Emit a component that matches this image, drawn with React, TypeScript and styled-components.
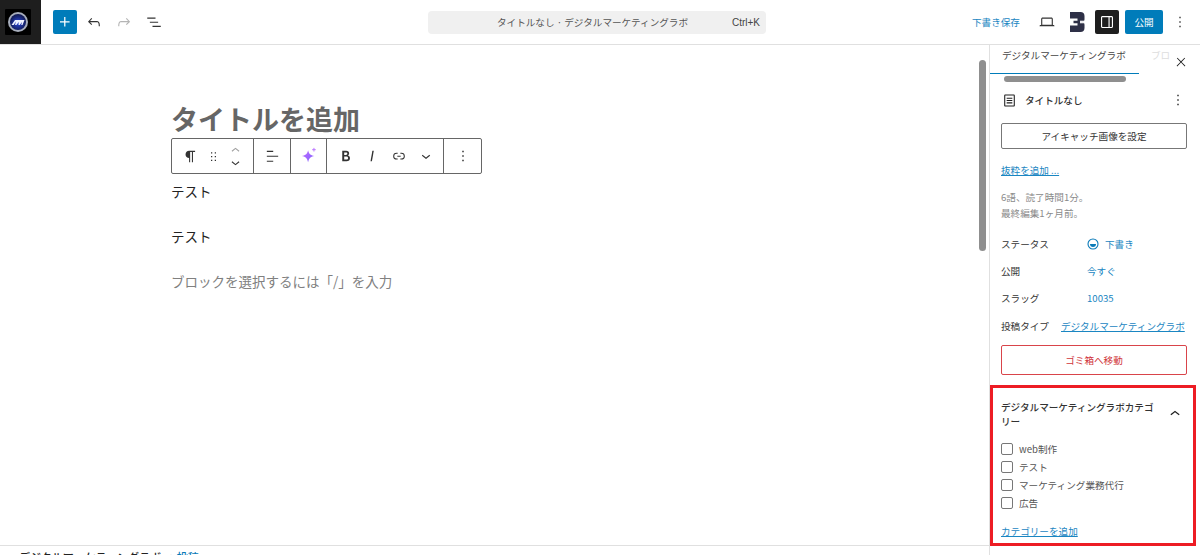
import React, { ReactElement } from "react";
import styled, { createGlobalStyle } from "styled-components";

const paths = {
  plus: "M11 12.5V17.5H12.5V12.5H17.5V11H12.5V6H11V11H6V12.5H11Z",
  undo: "M18.3 11.7c-.6-.6-1.4-.9-2.3-.9H6.7l2.9-3.3-1.1-1-4.5 5L8.5 16l1-1-2.7-2.7H16c.5 0 .9.2 1.3.5 1 1 1 3.4 1 4.5v.3h1.5v-.2c0-1.5 0-4.3-1.5-5.7z",
  redo: "M15.6 6.5l-1.1 1 2.9 3.3H8c-.9 0-1.7.3-2.3.9-1.4 1.5-1.4 4.2-1.4 5.6v.2h1.5v-.3c0-1.1 0-3.5 1-4.5.3-.3.7-.5 1.3-.5h9.2L14.5 15l1.1 1.1 4.6-4.6-4.6-5z",
  list: "M3 6h11v1.5H3V6Zm3.5 5.500h11V13h-11v-1.5ZM21 17H10v1.500h11V17Z",
  laptop:
    "M20.5 16h-.7V8c0-1.1-.9-2-2-2H6.2c-1.1 0-2 .9-2 2v8h-.7c-.8 0-1.5.7-1.5 1.5h20c0-.8-.7-1.5-1.5-1.5zM5.7 8c0-.3.2-.5.5-.5h11.6c.3 0 .5.2.5.5v7.6H5.7V8z",
  drawer:
    "M18 4H6c-1.1 0-2 .9-2 2v12c0 1.1.9 2 2 2h12c1.1 0 2-.9 2-2V6c0-1.1-.9-2-2-2zm-4 14.5H6c-.3 0-.5-.2-.5-.5V6c0-.3.2-.5.5-.5h8v13zm4.5-.5c0 .3-.2.5-.5.5h-2.5v-13H18c.3 0 .5.2.5.5v12z",
  more: "M13 19h-2v-2h2v2zm0-6h-2v-2h2v2zm0-6h-2V5h2v2z",
  close:
    "M13 11.8l6.1-6.3-1-1-6.1 6.2-6.1-6.2-1 1 6.1 6.3-6.5 6.7 1 1 6.5-6.6 6.5 6.6 1-1z",
  up: "M6.5 12.4L12 8l5.5 4.4-.9 1.2L12 10l-4.5 3.6-1-1.2z",
  down: "M17.5 11.6L12 16l-5.5-4.4.9-1.2L12 14l4.5-3.6 1 1.2z",
  pilcrow:
    "m9.99609 14v-.2251l.00391.0001v6.225h1.5v-14.5h2.5v14.5h1.5v-14.5h3v-1.5h-8.50391c-2.76142 0-5 2.23858-5 5 0 2.7614 2.23858 5 5 5z",
  drag: "M8 7h2V5H8v2zm0 6h2v-2H8v2zm0 6h2v-2H8v2zm6-14v2h2V5h-2zm0 8h2v-2h-2v2zm0 6h2v-2h-2v2z",
  align: "M13 5.5H4V4h9v1.5Zm7 7H4V11h16v1.5Zm-7 7H4V18h9v1.5Z",
  bold: "M14.7 11.3c1-.6 1.5-1.6 1.5-3 0-2.3-1.3-3.4-4-3.4H7v14h5.8c1.4 0 2.5-.3 3.3-1 .8-.7 1.2-1.7 1.2-2.9.1-1.9-.8-3.1-2.6-3.7zm-5.1-4h2.3c.6 0 1.1.1 1.4.4.3.3.5.7.5 1.2s-.2 1-.5 1.2c-.3.3-.8.4-1.4.4H9.6V7.3zm4.6 9c-.4.3-1 .4-1.7.4H9.6v-3.9h2.9c.7 0 1.3.2 1.7.5.4.3.6.8.6 1.5s-.2 1.2-.6 1.5z",
  italic: "M12.5 5L10 19h1.9l2.5-14z",
  link: "M10 17.389H8.444A5.194 5.194 0 1 1 8.444 7H10v1.5H8.444a3.694 3.694 0 0 0 0 7.389H10v1.5ZM14 7h1.556a5.194 5.194 0 0 1 0 10.39H14v-1.5h1.556a3.694 3.694 0 0 0 0-7.39H14V7Zm-4.5 6h5v-1.5h-5V13Z",
  doc: "M18 3.5H6c-.8 0-1.500.7-1.500 1.500v14c0 .8.7 1.500 1.500 1.500h12c.8 0 1.500-.7 1.500-1.500V5c0-.8-.7-1.500-1.500-1.500zm0 15.500H6V5h12v14zM8 8h8v1.500H8V8zm0 3.300h8v1.500H8v-1.500zm0 3.300h8v1.500H8v-1.500z",
};

type IconName = keyof typeof paths;

function Icon({ name, size = 20 }: { name: IconName; size?: number }): ReactElement {
  return (
    <svg width={size} height={size} viewBox="0 0 24 24" fill="currentColor">
      <path d={paths[name]} />
    </svg>
  );
}

function App(): ReactElement {
  return (
    <>
      <GlobalStyle />
      <Page>
        <TopBar>
          <LogoTile>
            <svg width="26" height="26" viewBox="0 0 26 26">
              <defs>
                <radialGradient id="logoFace" cx="0.5" cy="0.55" r="0.6">
                  <stop offset="0" stopColor="#2c49d8" />
                  <stop offset="1" stopColor="#0c1240" />
                </radialGradient>
              </defs>
              <rect width="26" height="26" rx="1" fill="#000" />
              <circle cx="13" cy="13" r="10" fill="#a7adbb" />
              <circle cx="13" cy="13" r="8" fill="url(#logoFace)" />
              <path d="M6.500 16l3.500-5h9.500l-2 5h-1.300l.8-3-2.300 3h-1.200l.2-3-2.300 3h-1.300l.7-3.500-2 3.500z" fill="#eef1ff" />
            </svg>
          </LogoTile>
          <LeftTools>
            <InserterButton>
              <Icon name="plus" size={20} />
            </InserterButton>
            <ToolButton>
              <Icon name="undo" size={18} />
            </ToolButton>
            <ToolButton $muted>
              <Icon name="redo" size={18} />
            </ToolButton>
            <ToolButton>
              <Icon name="list" size={18} />
            </ToolButton>
          </LeftTools>
          <CommandBar>
            <CommandTitle>タイトルなし · デジタルマーケティングラボ</CommandTitle>
            <CommandKey>Ctrl+K</CommandKey>
          </CommandBar>
          <RightTools>
            <SaveDraft>下書き保存</SaveDraft>
            <ToolButton>
              <Icon name="laptop" size={18} />
            </ToolButton>
            <BrandMark>
              <svg width="16" height="20" viewBox="0 0 16 20">
                <path d="M1 0h10.500C14 0 15.500 1.500 15.500 4v3c0 1.300-.5 2.300-1.300 3 .8.700 1.300 1.700 1.300 3v3c0 2.500-1.500 4-4 4H1z" fill="#2e3047" />
                <path d="M1 6.500h7.500v2.200H4.500v2.600h4v2.200H1z" fill="#fff" />
                <path d="M11 8.700h4.500v2.600H11z" fill="#fff" opacity="0.9" />
              </svg>
            </BrandMark>
            <DrawerToggle>
              <Icon name="drawer" size={18} />
            </DrawerToggle>
            <PublishButton>公開</PublishButton>
            <KebabSlot>
              <Icon name="more" size={18} />
            </KebabSlot>
          </RightTools>
        </TopBar>

        <Workspace>
          <Editor>
            <Canvas>
              <PostTitle>タイトルを追加</PostTitle>
              <BlockToolbar>
                <ToolbarGroup $width={82}>
                  <ToolbarGlyph $width={32}>
                    <Icon name="pilcrow" size={17} />
                  </ToolbarGlyph>
                  <ToolbarGlyph $width={14}>
                    <Icon name="drag" size={15} />
                  </ToolbarGlyph>
                  <MoverStack>
                    <MoverArrow $muted>
                      <Icon name="up" size={17} />
                    </MoverArrow>
                    <MoverArrow>
                      <Icon name="down" size={17} />
                    </MoverArrow>
                  </MoverStack>
                </ToolbarGroup>
                <ToolbarGroup $width={37}>
                  <Icon name="align" size={17} />
                </ToolbarGroup>
                <ToolbarGroup $width={36}>
                  <svg width="18" height="18" viewBox="0 0 20 20">
                    <defs>
                      <linearGradient id="spark" x1="0" y1="0" x2="1" y2="1">
                        <stop offset="0" stopColor="#c26bff" />
                        <stop offset="1" stopColor="#7d62ff" />
                      </linearGradient>
                    </defs>
                    <path d="M9 3.500c.9 4 2.500 5.600 7 6.500-4.500.9-6.100 2.500-7 7-.9-4.500-2.500-6.100-7-7 4.500-.9 6.100-2.500 7-6.500z" fill="url(#spark)" />
                    <path d="M15.500 1v4M13.500 3h4" stroke="#b66bff" strokeWidth="1" />
                  </svg>
                </ToolbarGroup>
                <ToolbarGroup $width={117}>
                  <ToolbarGlyph $width={28}>
                    <Icon name="bold" size={18} />
                  </ToolbarGlyph>
                  <ToolbarGlyph $width={25}>
                    <Icon name="italic" size={18} />
                  </ToolbarGlyph>
                  <ToolbarGlyph $width={29}>
                    <Icon name="link" size={16} />
                  </ToolbarGlyph>
                  <ToolbarGlyph $width={25}>
                    <Icon name="down" size={18} />
                  </ToolbarGlyph>
                </ToolbarGroup>
                <ToolbarGroup $width={38} $last>
                  <Icon name="more" size={18} />
                </ToolbarGroup>
              </BlockToolbar>
              <Paragraph>テスト</Paragraph>
              <Paragraph>テスト</Paragraph>
              <Paragraph $placeholder>ブロックを選択するには「/」を入力</Paragraph>
            </Canvas>
            <ScrollTrack>
              <ScrollThumb />
            </ScrollTrack>
          </Editor>

          <Sidebar>
            <TabRow>
              <Tab $active>デジタルマーケティングラボ</Tab>
              <GhostTab>ブロ</GhostTab>
              <CloseSlot>
                <Icon name="close" size={14} />
              </CloseSlot>
            </TabRow>
            <SideScrollThumb />
            <DocRow>
              <Icon name="doc" size={17} />
              <DocTitle>タイトルなし</DocTitle>
              <DocMore>
                <Icon name="more" size={18} />
              </DocMore>
            </DocRow>
            <Panel>
              <OutlineButton>アイキャッチ画像を設定</OutlineButton>
              <ExcerptLink>抜粋を追加 ...</ExcerptLink>
              <MetaText>
                6語、読了時間1分。
                <br />
                最終編集1ヶ月前。
              </MetaText>
              <FieldList>
                <FieldRow>
                  <FieldLabel>ステータス</FieldLabel>
                  <FieldValue>
                    <svg width="12" height="12" viewBox="0 0 12 12">
                      <circle cx="6" cy="6" r="5" fill="none" stroke="#0a7ab8" strokeWidth="1.100" />
                      <path d="M3 6h6a3 3 0 0 1-6 0z" fill="#0a7ab8" />
                    </svg>
                    下書き
                  </FieldValue>
                </FieldRow>
                <FieldRow>
                  <FieldLabel>公開</FieldLabel>
                  <FieldValue>今すぐ</FieldValue>
                </FieldRow>
                <FieldRow>
                  <FieldLabel>スラッグ</FieldLabel>
                  <FieldValue>10035</FieldValue>
                </FieldRow>
                <FieldRow>
                  <FieldLabel>投稿タイプ</FieldLabel>
                  <PostTypeLink>デジタルマーケティングラボ</PostTypeLink>
                </FieldRow>
              </FieldList>
              <TrashButton>ゴミ箱へ移動</TrashButton>
            </Panel>
            <CategoryPanel>
              <CategoryHeader>
                <CategoryTitle>デジタルマーケティングラボカテゴリー</CategoryTitle>
                <Icon name="up" size={20} />
              </CategoryHeader>
              <CheckList>
                {["web制作", "テスト", "マーケティング業務代行", "広告"].map((label) => (
                  <CheckRow key={label}>
                    <CheckBox />
                    {label}
                  </CheckRow>
                ))}
              </CheckList>
              <AddCategory>カテゴリーを追加</AddCategory>
            </CategoryPanel>
          </Sidebar>
        </Workspace>

        <FooterBar>
          デジタルマーケティングラボ → <FooterLink>投稿</FooterLink>
        </FooterBar>
      </Page>
    </>
  );
}

const GlobalStyle = createGlobalStyle`
  html, body {
    margin: 0;
    padding: 0;
    background: #fff;
  }

  body {
    font-family: "Noto Sans CJK JP", "Noto Sans", sans-serif;
    color: #1e1e1e;
  }

  svg {
    display: block;
    flex-shrink: 0;
  }
`;

const Page = styled.div`
  width: 1200px;
  height: 555px;
  overflow: hidden;
  display: flex;
  flex-direction: column;
  position: relative;
`;

const TopBar = styled.header`
  height: 44px;
  flex-shrink: 0;
  display: flex;
  align-items: center;
  border-bottom: 1px solid #e0e0e0;
`;

const LogoTile = styled.div`
  width: 41px;
  height: 44px;
  background: #1e1e1e;
  display: flex;
  align-items: center;
  justify-content: center;
  padding-right: 5px;
  box-sizing: border-box;
`;

const LeftTools = styled.div`
  display: flex;
  align-items: center;
  margin-left: 12px;
  width: 375px;
`;

const InserterButton = styled.div`
  width: 24px;
  height: 24px;
  margin-right: 2px;
  border-radius: 2px;
  background: #007cba;
  color: #fff;
  display: flex;
  align-items: center;
  justify-content: center;
`;

const ToolButton = styled.div<{ $muted?: boolean }>`
  width: 30px;
  height: 24px;
  display: flex;
  align-items: center;
  justify-content: center;
  color: ${({ $muted }) => ($muted ? "#b5b5b5" : "#333")};
`;

const CommandBar = styled.div`
  width: 338px;
  height: 23px;
  background: #f0f0f0;
  border-radius: 4px;
  display: flex;
  align-items: center;
  padding: 0 6px 0 69px;
  box-sizing: border-box;
  font-size: 9.6px;
  color: #555;
`;

const CommandTitle = styled.span`
  flex: 1;
  white-space: nowrap;
`;

const CommandKey = styled.span`
  font-family: "Liberation Sans", sans-serif;
  font-size: 10px;
  color: #444;
`;

const RightTools = styled.div`
  display: flex;
  align-items: center;
  margin-left: 206px;
`;

const SaveDraft = styled.span`
  width: 60px;
  font-size: 9.6px;
  color: #1a86c2;
  white-space: nowrap;
`;

const BrandMark = styled.div`
  width: 31px;
  margin-left: 2px;
  padding-right: 6px;
  box-sizing: border-box;
  display: flex;
  justify-content: center;
`;

const DrawerToggle = styled.div`
  width: 24px;
  height: 24px;
  border-radius: 2px;
  background: #1e1e1e;
  color: #fff;
  display: flex;
  align-items: center;
  justify-content: center;
`;

const PublishButton = styled.div`
  width: 38px;
  height: 24px;
  margin-left: 6px;
  border-radius: 2px;
  background: #007cba;
  color: #fff;
  font-size: 9.6px;
  display: flex;
  align-items: center;
  justify-content: center;
`;

const KebabSlot = styled.div`
  width: 34px;
  color: #444;
  display: flex;
  justify-content: center;
`;

const Workspace = styled.div`
  flex: 1;
  min-height: 0;
  display: flex;
`;

const Editor = styled.main`
  width: 989px;
  flex-shrink: 0;
  display: flex;
  justify-content: space-between;
`;

const Canvas = styled.div`
  padding: 55px 0 0 171px;
`;

const PostTitle = styled.h1`
  margin: 0;
  height: 38px;
  line-height: 38px;
  font-size: 27px;
  font-weight: 700;
  color: #666;
`;

const BlockToolbar = styled.div`
  width: 311px;
  height: 36px;
  box-sizing: border-box;
  display: flex;
  border: 1px solid #666;
  border-radius: 2px;
  margin-bottom: 7px;
  color: #333;
`;

const ToolbarGroup = styled.div<{ $width: number; $last?: boolean }>`
  width: ${({ $width }) => $width}px;
  flex-shrink: 0;
  box-sizing: border-box;
  display: flex;
  align-items: center;
  justify-content: center;
  border-right: ${({ $last }) => ($last ? "none" : "1px solid #666")};
`;

const ToolbarGlyph = styled.div<{ $width: number }>`
  width: ${({ $width }) => $width}px;
  flex-shrink: 0;
  display: flex;
  justify-content: center;
`;

const MoverStack = styled.div`
  width: 30px;
  display: flex;
  flex-direction: column;
  align-items: center;
  gap: 1px;
`;

const MoverArrow = styled.div<{ $muted?: boolean }>`
  height: 11px;
  display: flex;
  align-items: center;
  color: ${({ $muted }) => ($muted ? "#a0a0a0" : "#333")};
`;

const Paragraph = styled.p<{ $placeholder?: boolean }>`
  margin: 0 0 25px;
  height: 20px;
  line-height: 20px;
  font-size: 13.5px;
  color: ${({ $placeholder }) => ($placeholder ? "#808080" : "#222")};
`;

const ScrollTrack = styled.div`
  width: 10px;
  padding: 15px 0 0;
`;

const ScrollThumb = styled.div`
  width: 7px;
  height: 191px;
  border-radius: 4px;
  background: #8f8f8f;
`;

const Sidebar = styled.aside`
  width: 211px;
  flex-shrink: 0;
  box-sizing: border-box;
  border-left: 1px solid #e0e0e0;
  display: flex;
  flex-direction: column;
  min-height: 0;
`;

const TabRow = styled.div`
  height: 29px;
  flex-shrink: 0;
  display: flex;
  position: relative;
  box-sizing: border-box;
`;

const Tab = styled.div<{ $active?: boolean }>`
  width: 149px;
  flex-shrink: 0;
  box-sizing: border-box;
  padding-left: 12px;
  font-size: 9.6px;
  line-height: 20px;
  color: #444;
  white-space: nowrap;
  border-bottom: 1px solid ${({ $active }) => ($active ? "#007cba" : "transparent")};
`;

const GhostTab = styled.div`
  margin-left: 12px;
  font-size: 9.6px;
  line-height: 20px;
  white-space: nowrap;
  color: #ddd;
`;

const CloseSlot = styled.div`
  position: absolute;
  right: 12px;
  top: 10px;
  color: #1e1e1e;
`;

const SideScrollThumb = styled.div`
  width: 122px;
  height: 6px;
  margin: 2px 0 0 14px;
  border-radius: 3px;
  background: #8f8f8f;
  flex-shrink: 0;
`;

const DocRow = styled.div`
  display: flex;
  align-items: center;
  gap: 7px;
  height: 18px;
  margin: 9px 0 0 11px;
  padding-right: 13px;
  flex-shrink: 0;
`;

const DocTitle = styled.span`
  font-size: 9.6px;
  font-weight: 500;
  color: #333;
  flex: 1;
`;

const DocMore = styled.div`
  color: #333;
`;

const Panel = styled.section`
  padding: 14px 13px 0 11px;
  display: flex;
  flex-direction: column;
  flex-shrink: 0;
`;

const OutlineButton = styled.div`
  height: 26px;
  box-sizing: border-box;
  border: 1px solid #777;
  border-radius: 2px;
  display: flex;
  align-items: center;
  justify-content: center;
  font-size: 9.6px;
  color: #333;
`;

const ExcerptLink = styled.a`
  margin-top: 14px;
  font-size: 9.6px;
  line-height: 15px;
  color: #1a86c2;
  text-decoration: underline;
`;

const MetaText = styled.p`
  margin: 11px 0 0;
  font-size: 9.6px;
  line-height: 16px;
  color: #8a8a8a;
`;

const FieldList = styled.div`
  margin-top: 9px;
  display: flex;
  flex-direction: column;
`;

const FieldRow = styled.div`
  height: 27.3px;
  display: flex;
  align-items: center;
  font-size: 9.6px;
  white-space: nowrap;
`;

const FieldLabel = styled.span`
  width: 60px;
  flex-shrink: 0;
  color: #333;
`;

const FieldValue = styled.span`
  margin-left: 26px;
  display: flex;
  align-items: center;
  gap: 6px;
  color: #1a86c2;
`;

const PostTypeLink = styled.a`
  color: #1a86c2;
  text-decoration: underline;
`;

const TrashButton = styled.div`
  margin-top: 6px;
  height: 30px;
  box-sizing: border-box;
  border: 1px solid #d9444a;
  border-radius: 2px;
  display: flex;
  align-items: center;
  justify-content: center;
  font-size: 9.6px;
  color: #d0343a;
`;

const CategoryPanel = styled.section`
  margin-top: 10px;
  height: 161px;
  width: 206px;
  box-sizing: border-box;
  flex-shrink: 0;
  border: 3px solid #ed1c24;
  padding: 12px 8px 0 8px;
  display: flex;
  flex-direction: column;
`;

const CategoryHeader = styled.div`
  display: flex;
  align-items: center;
  justify-content: space-between;
`;

const CategoryTitle = styled.h2`
  margin: 0;
  width: 158px;
  font-size: 9.6px;
  line-height: 14px;
  font-weight: 500;
  color: #333;
`;

const CheckList = styled.div`
  margin-top: 15px;
  display: flex;
  flex-direction: column;
  gap: 6px;
`;

const CheckRow = styled.label`
  height: 12px;
  display: flex;
  align-items: center;
  gap: 6px;
  font-size: 9.6px;
  color: #555;
`;

const CheckBox = styled.span`
  width: 12px;
  height: 12px;
  box-sizing: border-box;
  border: 1px solid #777;
  border-radius: 2px;
`;

const AddCategory = styled.a`
  margin-top: 15px;
  font-size: 9.6px;
  line-height: 14px;
  color: #1a86c2;
  text-decoration: underline;
`;

const FooterBar = styled.footer`
  position: absolute;
  left: 0;
  right: 211px;
  top: 545px;
  height: 30px;
  border-top: 1px solid #e0e0e0;
  padding: 4px 0 0 19px;
  font-size: 11px;
  line-height: 14px;
  font-weight: 500;
  color: #222;
`;

const FooterLink = styled.span`
  color: #0a7ab8;
`;

export default App;
